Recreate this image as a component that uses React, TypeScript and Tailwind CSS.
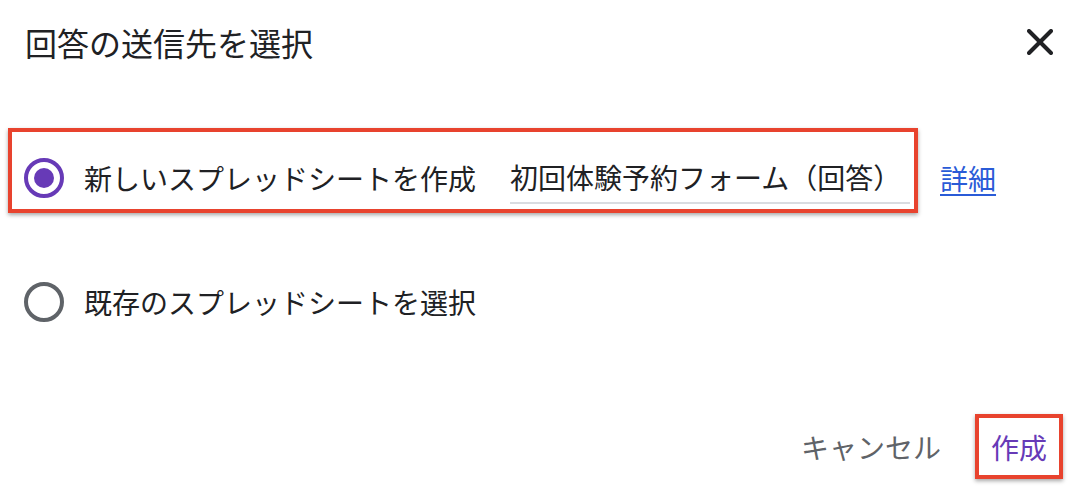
import React from "react";

const font = { fontFamily: '"Noto Sans CJK JP", "Noto Sans", sans-serif' };

export default function App() {
  return (
    <div
      className="w-[1080px] h-[502px] bg-white text-[#202124] overflow-hidden"
      style={font}
    >
      {/* Header */}
      <div className="h-[84px] flex items-center justify-between pl-[25px] pr-[27px]">
        <h1 className="text-[32px] leading-[44px] font-normal">回答の送信先を選択</h1>
        <button className="w-[26px] h-[26px] flex items-center justify-center" aria-label="閉じる">
          <svg width="26" height="26" viewBox="0 0 26 26">
            <line x1="2" y1="2" x2="24" y2="24" stroke="#202124" strokeWidth="4" strokeLinecap="round" />
            <line x1="24" y1="2" x2="2" y2="24" stroke="#202124" strokeWidth="4" strokeLinecap="round" />
          </svg>
        </button>
      </div>

      {/* Option 1 */}
      <div className="mt-[44px] flex items-start">
        <div className="ml-[8px] w-[910px] h-[85px] border-4 border-[#e8432e] shadow-[0_2px_4px_rgba(0,0,0,0.35)] flex items-center pl-[12px] pr-[4px] pt-[20px] pb-[5px]">
          <div className="w-[40px] h-[40px] rounded-full border-4 border-[#673ab7] flex items-center justify-center shrink-0">
            <div className="w-[20px] h-[20px] rounded-full bg-[#673ab7]" />
          </div>
          <span className="ml-[20px] text-[28px] leading-[40px] whitespace-nowrap">新しいスプレッドシートを作成</span>
          <div className="ml-auto w-[400px] h-[52px] border-b-2 border-[#dadce0] flex items-center">
            <span className="text-[28px] leading-[40px] whitespace-nowrap">初回体験予約フォーム（回答）</span>
          </div>
        </div>
        <a className="ml-[22px] mt-[30px] text-[28px] leading-[40px] text-[#2a5bd7] underline underline-offset-[4px] decoration-2">
          詳細
        </a>
      </div>

      {/* Option 2 */}
      <div className="mt-[69px] ml-[24px] flex items-center h-[40px]">
        <div className="w-[40px] h-[40px] rounded-full border-4 border-[#5f6368] shrink-0" />
        <span className="ml-[20px] text-[28px] leading-[40px] whitespace-nowrap">既存のスプレッドシートを選択</span>
      </div>

      {/* Footer */}
      <div className="mt-[92px] flex items-center justify-end pr-[17px]">
        <span className="text-[28px] leading-[40px] text-[#5f6368] whitespace-nowrap">キャンセル</span>
        <div className="ml-[34px] w-[88px] h-[65px] border-4 border-[#e8432e] shadow-[0_2px_4px_rgba(0,0,0,0.35)] flex items-center justify-center">
          <span className="text-[28px] leading-[40px] text-[#673ab7] whitespace-nowrap">作成</span>
        </div>
      </div>
    </div>
  );
}
